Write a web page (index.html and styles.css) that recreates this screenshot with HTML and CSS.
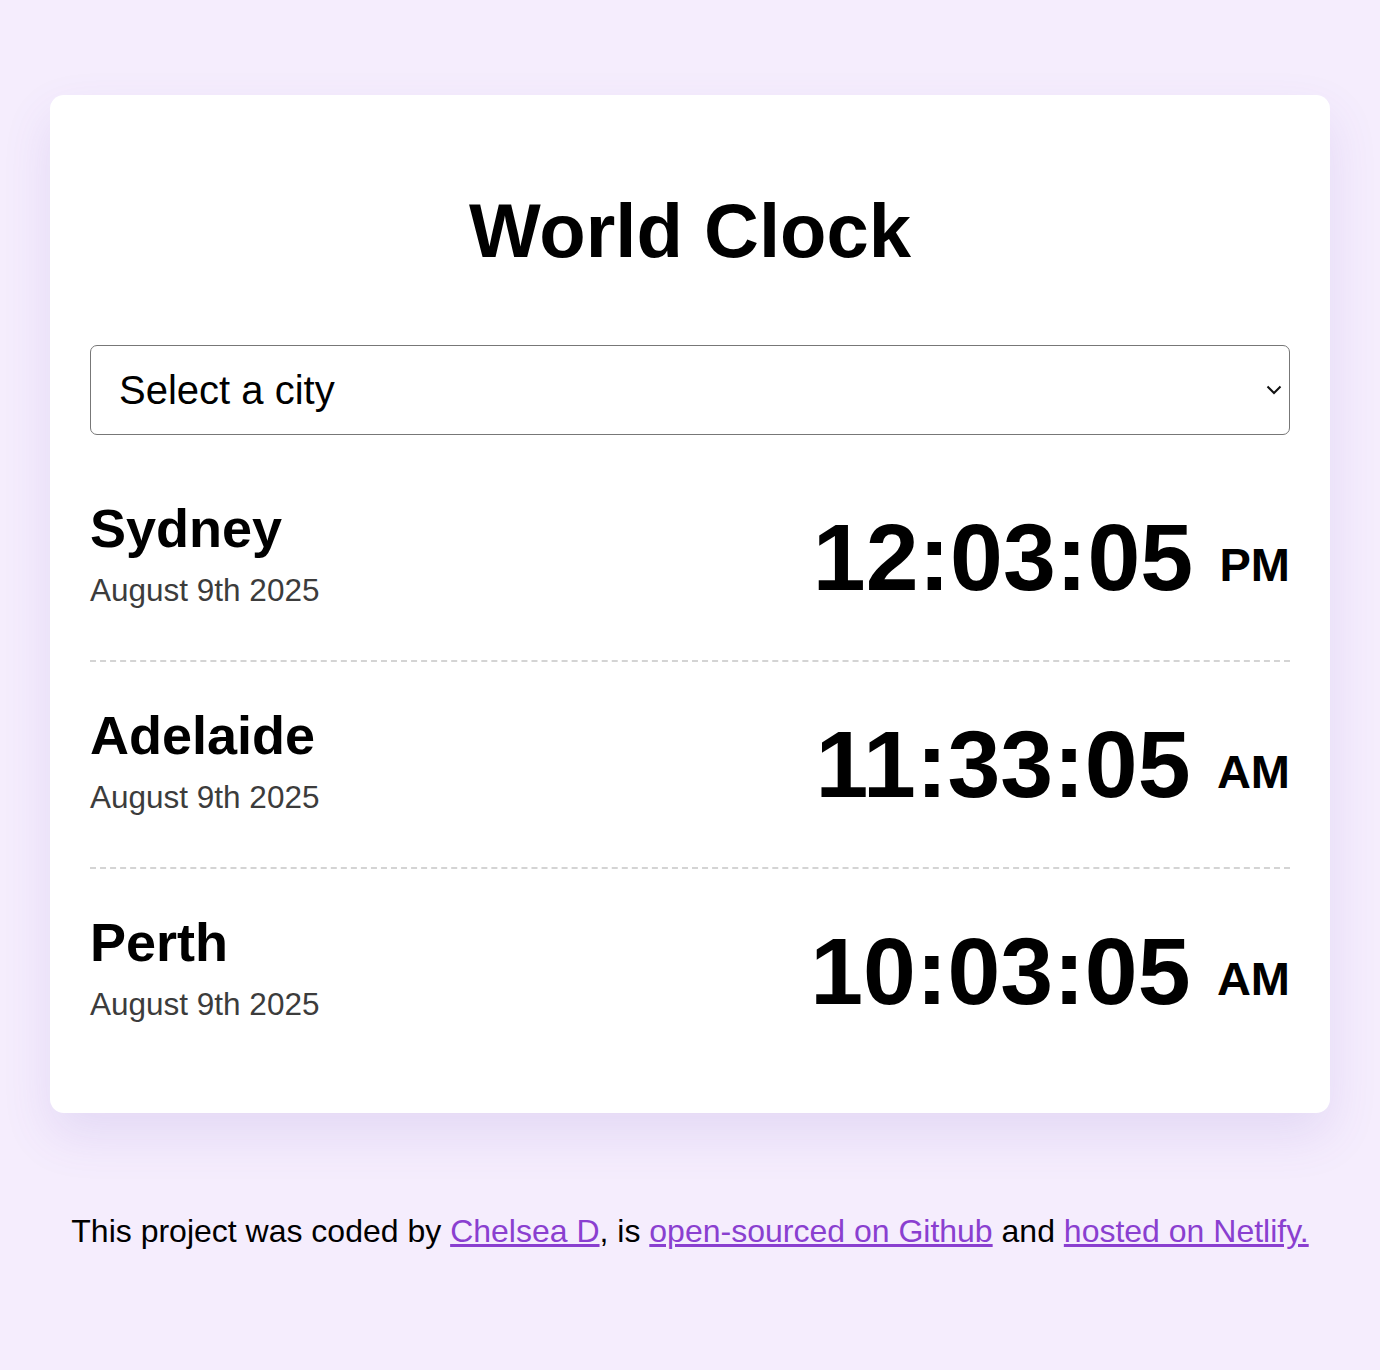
FILE: index.html
```html
<!DOCTYPE html>
<html lang="en">
<head>
<meta charset="utf-8">
<title>World Clock</title>
<link rel="stylesheet" href="styles.css">
</head>
<body>
<div class="page">
  <main class="card">
    <h1 class="title">World Clock</h1>
    <div class="select-wrap">
      <select class="city-select">
        <option>Select a city</option>
      </select>
      <svg class="chevron" width="16" height="10" viewBox="0 0 16 10"><path d="M1.5 1.5 L8 8 L14.5 1.5" fill="none" stroke="#111" stroke-width="2"/></svg>
    </div>
    <div class="cities">
      <div class="city">
        <div class="city-info">
          <div class="city-name">Sydney</div>
          <div class="city-date">August 9th 2025</div>
        </div>
        <div class="city-time">12:03:05 <span class="ampm">PM</span></div>
      </div>
      <div class="city">
        <div class="city-info">
          <div class="city-name">Adelaide</div>
          <div class="city-date">August 9th 2025</div>
        </div>
        <div class="city-time">11:33:05 <span class="ampm">AM</span></div>
      </div>
      <div class="city">
        <div class="city-info">
          <div class="city-name">Perth</div>
          <div class="city-date">August 9th 2025</div>
        </div>
        <div class="city-time">10:03:05 <span class="ampm">AM</span></div>
      </div>
    </div>
  </main>
  <footer class="footer">This project was coded by <a href="#">Chelsea D</a>, is <a href="#">open-sourced on Github</a> and <a href="#">hosted on Netlify.</a></footer>
</div>
</body>
</html>
```
FILE: styles.css
```css
* { box-sizing: border-box; }
html, body {
  margin: 0;
  padding: 0;
  background: #f5edfd;
  font-family: "Liberation Sans", Arial, sans-serif;
  color: #000;
}
.page {
  padding: 95px 50px 0;
}
.card {
  background: #fff;
  border-radius: 14px;
  padding: 40px 40px 39px;
  box-shadow: 0 22px 50px rgba(110, 70, 190, 0.12);
}
.title {
  margin: 52px 0 71px;
  text-align: center;
  font-size: 76px;
  font-weight: 700;
  line-height: 87px;
}
.select-wrap {
  position: relative;
  margin-bottom: 20px;
}
.city-select {
  display: block;
  width: 100%;
  height: 90px;
  appearance: none;
  -webkit-appearance: none;
  background: #fff;
  border: 1.5px solid #777;
  border-radius: 7px;
  padding: 0 28px;
  font-family: "Liberation Sans", Arial, sans-serif;
  font-size: 40px;
  color: #000;
}
.chevron {
  position: absolute;
  right: 8px;
  top: 40px;
}
.city {
  display: flex;
  justify-content: space-between;
  align-items: flex-start;
  padding: 42px 0 48px;
  border-bottom: 2px dashed #d4d4d4;
}
.city:last-child {
  border-bottom: none;
}
.city-name {
  font-size: 54px;
  font-weight: 700;
  line-height: 62px;
}
.city-date {
  margin-top: 13px;
  font-size: 31.5px;
  line-height: 37px;
  color: #3c3c3c;
}
.city-time {
  margin-top: 6px;
  font-size: 95px;
  font-weight: 700;
  line-height: 109px;
}
.ampm {
  font-size: 47px;
  line-height: 1;
  vertical-align: middle;
}
.footer {
  margin-top: 100px;
  text-align: center;
  font-size: 32px;
  line-height: 37px;
  color: #000;
}
.footer a {
  color: #8a3fd0;
}
```
